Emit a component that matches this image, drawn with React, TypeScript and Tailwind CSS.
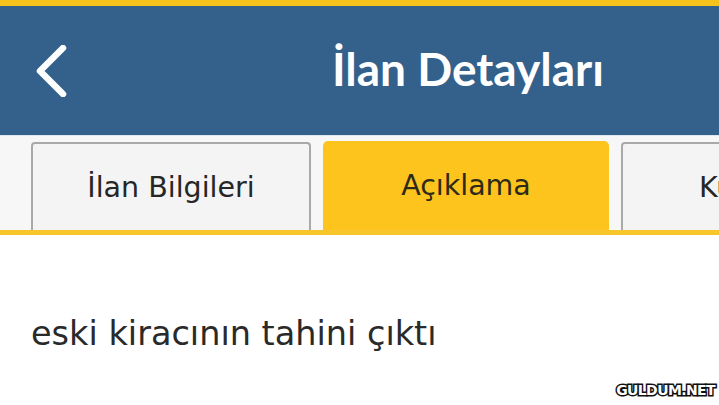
import React from "react";

const bodyFont = { fontFamily: '"DejaVu Sans", "Noto Sans", sans-serif' };
const titleFont = { fontFamily: 'Lato, "Open Sans", sans-serif' };

function BackChevron() {
  return (
    <svg width="34" height="52" viewBox="0 0 34 52" className="shrink-0">
      <path
        d="M28 3 L5 26 L28 49"
        fill="none"
        stroke="#ffffff"
        strokeWidth="6.5"
        strokeLinecap="round"
        strokeLinejoin="round"
      />
    </svg>
  );
}

export default function App() {
  return (
    <div className="relative w-[719px] h-[405px] overflow-hidden bg-white" style={bodyFont}>
      {/* top accent strip */}
      <div className="h-[6px] bg-[#f6c21c]" />

      {/* navigation bar */}
      <div className="h-[129px] bg-[#33618c] flex items-center pl-[35px]">
        <BackChevron />
        <h1
          className="ml-[263px] text-[46px] font-bold text-white leading-none pb-[4px]"
          style={titleFont}
        >
          İlan Detayları
        </h1>
      </div>
      <div className="h-[1px] bg-[#dfe8ef]" />

      {/* tab strip */}
      <div className="h-[94px] bg-[#f7f7f7] flex items-end pl-[31px] gap-[12px] overflow-hidden">
        <div className="w-[280px] h-[88px] shrink-0 rounded-t-[4px] border-2 border-b-0 border-[#a9a9a9] bg-[#f4f4f4] flex items-center justify-center">
          <span className="text-[28.5px] text-[#262626] pt-[2px]">İlan Bilgileri</span>
        </div>
        <div className="w-[286px] h-[89px] shrink-0 rounded-t-[5px] bg-[#fcc41c] flex items-center justify-center">
          <span className="text-[28.5px] text-[#2e2a1a] pt-[2px]">Açıklama</span>
        </div>
        <div className="w-[180px] h-[88px] shrink-0 rounded-t-[4px] border-2 border-b-0 border-[#a9a9a9] bg-[#f4f4f4] flex items-center pl-[76px]">
          <span className="text-[28.5px] text-[#262626] pt-[2px]">Kullanıcı</span>
        </div>
      </div>
      <div className="h-[5px] bg-[#f8c52a]" />

      {/* description */}
      <div className="pt-[82px] pl-[31px]">
        <p className="text-[33.5px] text-[#2a2a2a] leading-none">
          eski kiracının tahini çıktı
        </p>
      </div>

      {/* site watermark */}
      <div
        className="absolute right-[4px] bottom-[4px] text-[14px] font-extrabold text-white tracking-[-0.6px]"
        style={{
          fontFamily: '"DejaVu Sans", sans-serif',
          WebkitTextStroke: "3px #111",
          paintOrder: "stroke fill",
        }}
      >
        GULDUM.NET
      </div>
    </div>
  );
}
